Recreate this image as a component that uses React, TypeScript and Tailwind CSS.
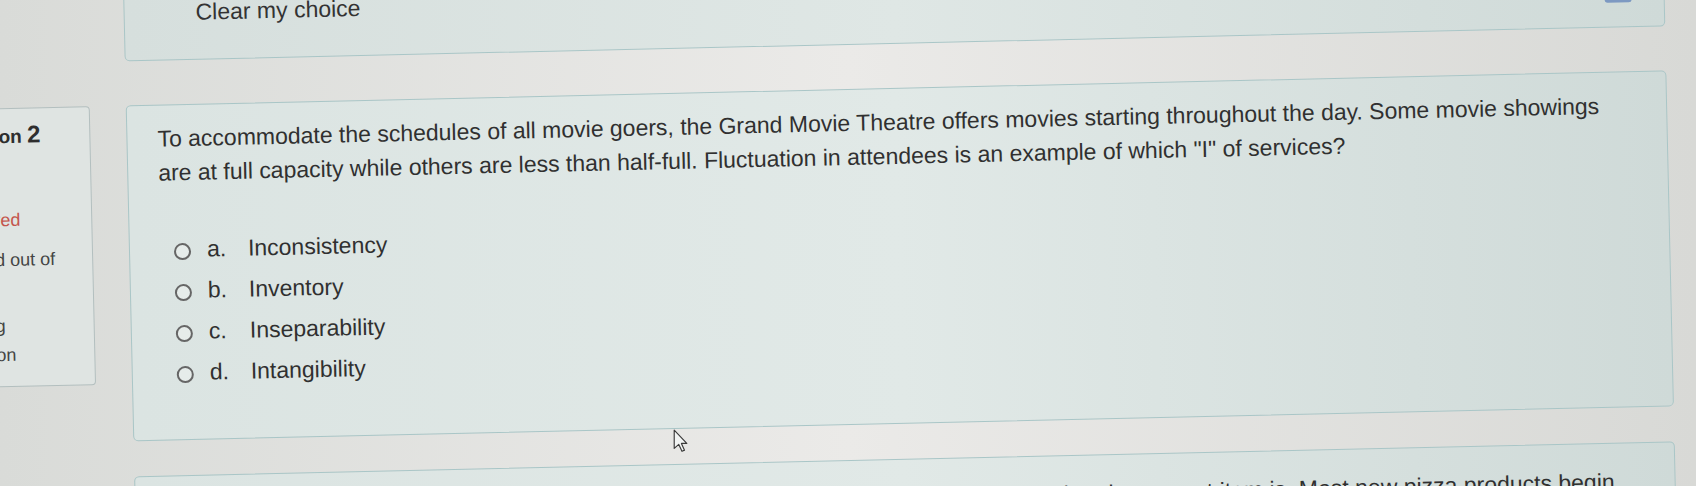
import React from "react";

const options = [
  { l: "a.", t: "Inconsistency" },
  { l: "b.", t: "Inventory" },
  { l: "c.", t: "Inseparability" },
  { l: "d.", t: "Intangibility" },
];

export default function App() {
  return (
    <div className="relative w-[1696px] h-[486px] overflow-hidden bg-linear-to-r from-[#d9dbd8] via-[#ebeae8] to-[#d8d9d6] font-['Liberation_Sans',Arial,sans-serif] text-[#333]">
      <div className="w-[1696px] h-[486px] rotate-[-1.3deg] flex flex-col">
        {/* previous question panel */}
        <div className="shrink-0 ml-[129px] w-[1541px] mt-[-60px] h-[105px] rounded-[5px] border border-[#a9c6c7] bg-linear-to-r from-[#d6dfdd] via-[#dfe7e5] to-[#cfdad8] flex items-end pl-[30px] pr-[34px] pb-[24px]">
          <div className="flex-1 flex items-start justify-between">
            <span className="ml-[41px] text-[23px] leading-[34px]">Clear my choice</span>
            <div className="w-[27px] h-[40px] mr-[-2px] bg-[#7d99c2] rounded-b-[3px]" />
          </div>
        </div>

        {/* question row */}
        <div className="shrink-0 mt-[44px] flex items-start">
          <div className="shrink-0 ml-[-70px] w-[163px] h-[279px] rounded-[4px] border border-[#b3bfbf] bg-[#dfe4e2] pl-[11px] flex flex-col whitespace-nowrap">
            <div className="mt-[9px] h-[36px] text-[19px] leading-[34px] font-bold text-[#2e2e2e]">
              Question <span className="text-[24px]">2</span>
            </div>
            <div className="mt-[23px] ml-[1px] text-[18px] leading-[29px] text-[#c4554c]">
              <div>Not yet</div>
              <div>answered</div>
            </div>
            <div className="mt-[11px] ml-[3px] text-[18px] leading-[29px] text-[#444]">
              <div>Marked out of</div>
              <div>1.00</div>
            </div>
            <div className="mt-[8px] ml-[4px] text-[18px] leading-[29px] text-[#444]">
              <div className="flex items-center gap-[5px]">
                <svg width="18" height="18" viewBox="0 0 18 18">
                  <path d="M3 2v14M3 3h10l-2 3.5 2 3.5H3" fill="none" stroke="#555" strokeWidth="1.5" />
                </svg>
                <span>Flag</span>
              </div>
              <div>question</div>
            </div>
          </div>

          <div className="shrink-0 ml-[36px] w-[1541px] h-[336px] rounded-[5px] border border-[#a9c6c7] bg-linear-to-r from-[#dbe4e2] via-[#e1e9e7] to-[#cfdad8] pl-[30px] pr-[34px] pt-[16px]">
            <div className="text-[23px] leading-[34px] text-[#303030]">
              To accommodate the schedules of all movie goers, the Grand Movie Theatre offers movies starting throughout the day. Some movie showings are at full capacity while others are less than half-full. Fluctuation in attendees is an example of which "I" of services?
            </div>
            <div className="mt-[40px] flex flex-col">
              {options.map((o) => (
                <div key={o.l} className="h-[41px] flex items-center text-[23px] leading-[41px] text-[#303030]">
                  <span className="ml-[14px] mt-[4px] w-[17px] h-[17px] rounded-full border-2 border-[#666] bg-[#e6ecea] shrink-0" />
                  <span className="ml-[16px] w-[41px] shrink-0">{o.l}</span>
                  <span>{o.t}</span>
                </div>
              ))}
            </div>
          </div>
        </div>

        {/* next question panel */}
        <div className="shrink-0 mt-[35px] ml-[129px] w-[1541px] h-[120px] rounded-[5px] border border-[#a9c6c7] bg-linear-to-r from-[#dbe4e2] via-[#e1e9e7] to-[#cfdad8] pl-[30px] pr-[34px] pt-[21px]">
          <div className="text-right whitespace-nowrap pr-[26px] text-[23px] leading-[34px] text-[#303030]">
            Restaurants add new menu items each year to keep customers curious about what the newest item is. Most new pizza products begin
          </div>
        </div>
      </div>

      {/* mouse cursor */}
      <svg className="absolute left-[673px] top-[429px]" width="15" height="24" viewBox="0 0 13 21">
        <path d="M1 1 L1 17 L5 13.5 L7.8 19.5 L10 18.5 L7.3 12.6 L12 12.6 Z" fill="#f2f4f3" stroke="#3a3a3a" strokeWidth="1" strokeLinejoin="round" />
      </svg>
    </div>
  );
}
